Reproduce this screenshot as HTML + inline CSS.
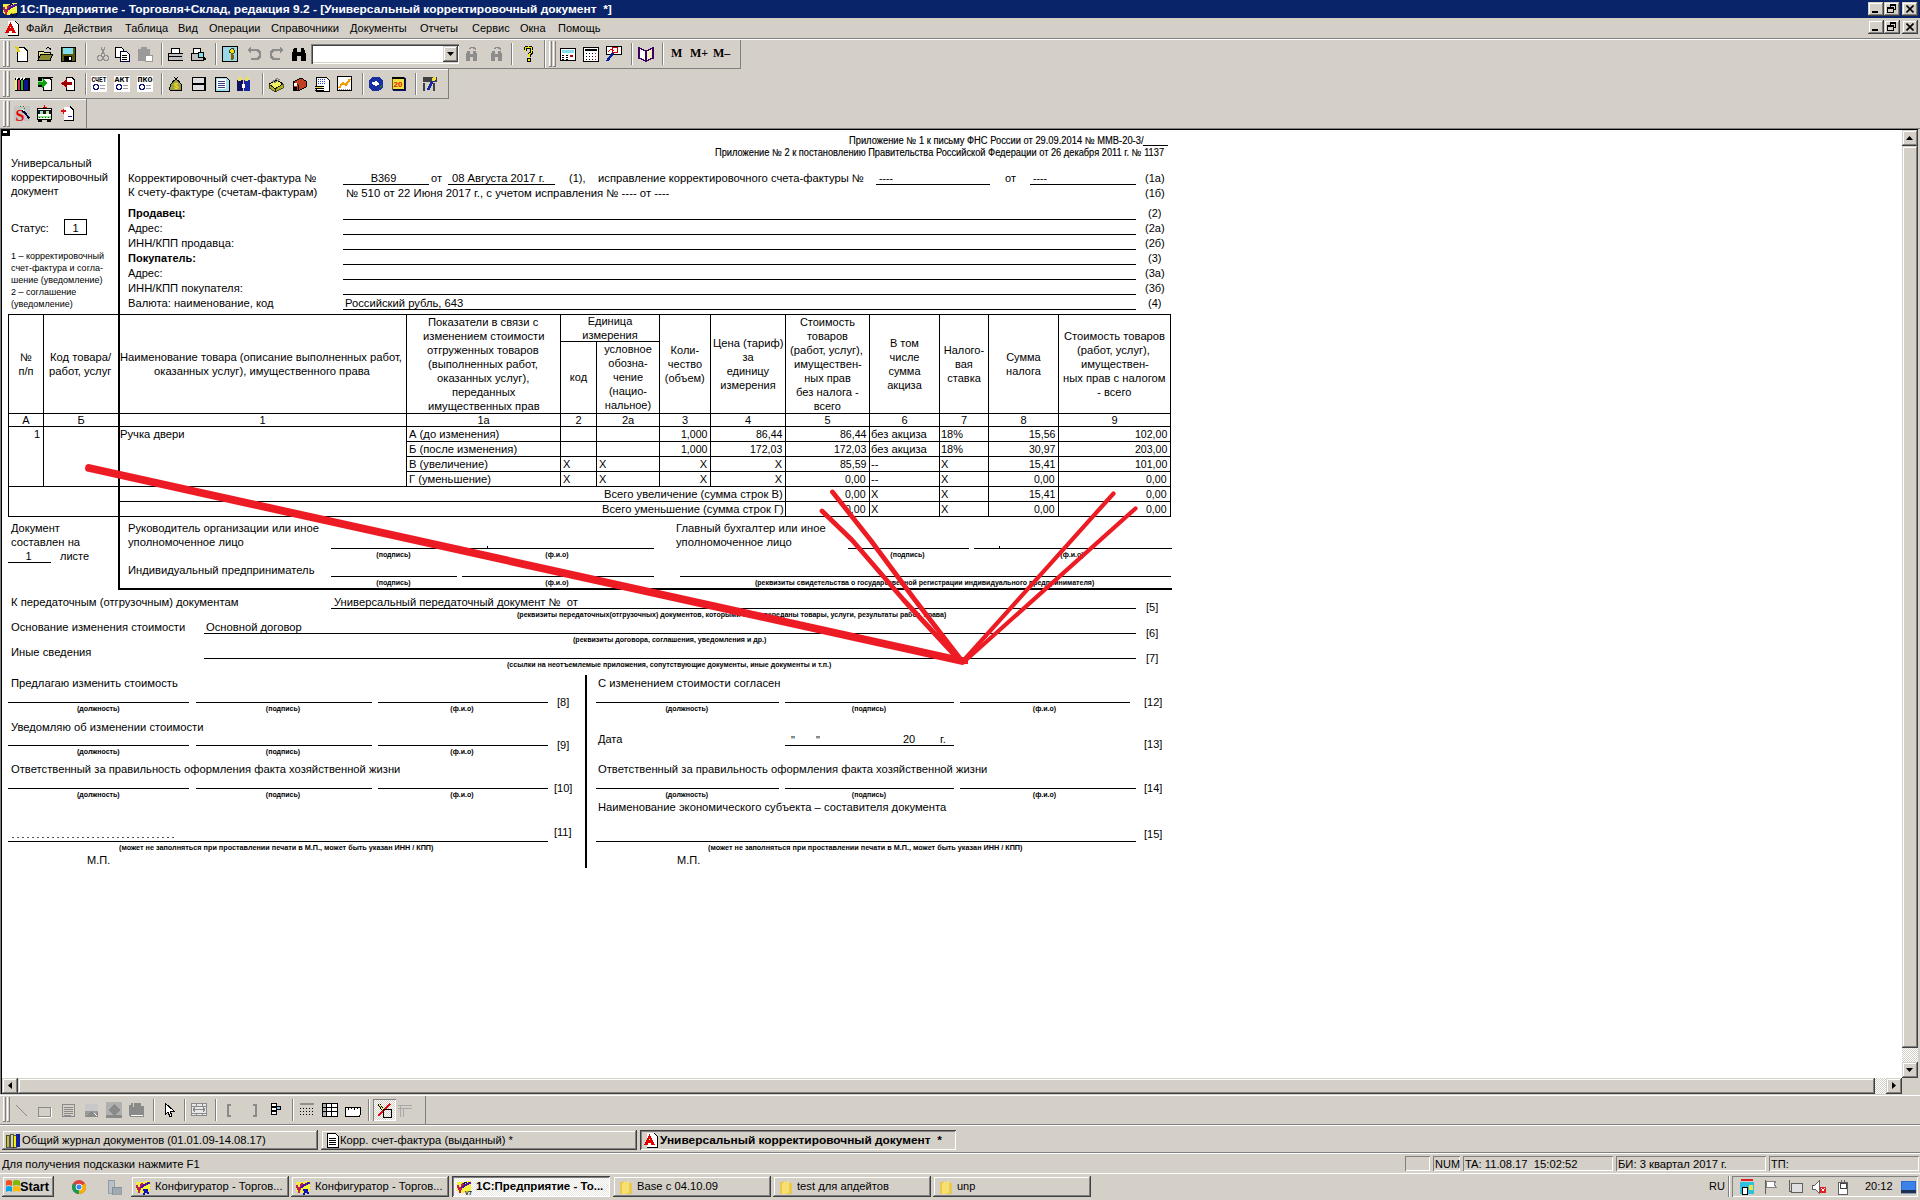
<!DOCTYPE html>
<html><head><meta charset="utf-8"><title>1C</title>
<style>
html,body{margin:0;padding:0;width:1920px;height:1200px;overflow:hidden;background:#D4D0C8;}
body{position:relative;font-family:"Liberation Sans",sans-serif;}
.t{position:absolute;white-space:pre;transform-origin:0 0;font-family:"Liberation Sans",sans-serif;}
.r{position:absolute;}
</style></head><body>
<div class="r" style="left:0px;top:0px;width:1920px;height:1200px;background:#D4D0C8;"></div>
<div class="r" style="left:0px;top:0px;width:1920px;height:18px;background:#0A246A;"></div>
<svg class="r" style="left:2px;top:1px" width="16" height="16" viewBox="0 0 16 16" shape-rendering="crispEdges"><path d="M1 3 H9 L10 2 H15 V12 L13 13 H8 L7 14 H3 L1 12 Z" fill="#F4F040"/><path d="M1.5 6 L4 12 L7 4" stroke="#C02050" stroke-width="2.2" fill="none"/><path d="M6 9 Q9 5 15 4" stroke="#5010A0" stroke-width="2.2" fill="none"/><path d="M7 5 Q9 3 11 4" stroke="#101060" stroke-width="1.3" fill="none"/><text x="9" y="16" font-size="5.5" font-weight="bold" fill="#000" font-family="Liberation Sans">V7</text></svg>
<div class="t" style="left:20.00px;top:4px;font-size:11px;line-height:11px;font-weight:bold;color:#fff;transform:scaleX(1.0862);">1С:Предприятие - Торговля+Склад, редакция 9.2 - [Универсальный корректировочный документ  *]</div>
<div class="r" style="left:1868px;top:2px;width:16px;height:14px;background:#D4D0C8;box-shadow: inset -1px -1px 0 #404040, inset 1px 1px 0 #D4D0C8, inset -2px -2px 0 #808080, inset 2px 2px 0 #FFFFFF;"></div>
<div class="r" style="left:1872px;top:11px;width:6px;height:2px;background:#000;"></div>
<div class="r" style="left:1884px;top:2px;width:16px;height:14px;background:#D4D0C8;box-shadow: inset -1px -1px 0 #404040, inset 1px 1px 0 #D4D0C8, inset -2px -2px 0 #808080, inset 2px 2px 0 #FFFFFF;"></div>
<div class="r" style="left:1890px;top:4px;width:6px;height:6px;border:1px solid #000;border-top-width:2px;box-sizing:border-box;"></div>
<div class="r" style="left:1887px;top:7px;width:7px;height:6px;border:1px solid #000;border-top-width:2px;box-sizing:border-box;background:#D4D0C8"></div>
<div class="r" style="left:1902px;top:2px;width:16px;height:14px;background:#D4D0C8;box-shadow: inset -1px -1px 0 #404040, inset 1px 1px 0 #D4D0C8, inset -2px -2px 0 #808080, inset 2px 2px 0 #FFFFFF;"></div>
<svg class="r" style="left:1906px;top:5px" width="8" height="8"><path d="M0.5 0.5 L7.5 7.5 M7.5 0.5 L0.5 7.5" stroke="#000" stroke-width="1.6"/></svg>
<svg class="r" style="left:4px;top:20px" width="16" height="16" viewBox="0 0 16 16" shape-rendering="crispEdges"><path d="M4 1 H11 L14 4 V15 H4 Z" fill="#fff"/><path d="M11 1 L14 4 V15 H4" stroke="#000" fill="none"/><path d="M1 13 L6.5 2 L12 13 Z" fill="#E00000"/><rect x="5" y="11" width="3" height="2" fill="#fff"/><rect x="6" y="7" width="1" height="1" fill="#fff"/></svg>
<div class="t" style="left:26.00px;top:23px;font-size:11px;line-height:11px;">Файл</div>
<div class="t" style="left:64.00px;top:23px;font-size:11px;line-height:11px;">Действия</div>
<div class="t" style="left:125.00px;top:23px;font-size:11px;line-height:11px;">Таблица</div>
<div class="t" style="left:178.00px;top:23px;font-size:11px;line-height:11px;">Вид</div>
<div class="t" style="left:209.00px;top:23px;font-size:11px;line-height:11px;">Операции</div>
<div class="t" style="left:271.00px;top:23px;font-size:11px;line-height:11px;transform:scaleX(1.0200);">Справочники</div>
<div class="t" style="left:350.00px;top:23px;font-size:11px;line-height:11px;">Документы</div>
<div class="t" style="left:420.00px;top:23px;font-size:11px;line-height:11px;">Отчеты</div>
<div class="t" style="left:472.00px;top:23px;font-size:11px;line-height:11px;">Сервис</div>
<div class="t" style="left:520.00px;top:23px;font-size:11px;line-height:11px;">Окна</div>
<div class="t" style="left:558.00px;top:23px;font-size:11px;line-height:11px;">Помощь</div>
<div class="r" style="left:1868px;top:20px;width:16px;height:14px;background:#D4D0C8;box-shadow: inset -1px -1px 0 #404040, inset 1px 1px 0 #D4D0C8, inset -2px -2px 0 #808080, inset 2px 2px 0 #FFFFFF;"></div>
<div class="r" style="left:1872px;top:29px;width:6px;height:2px;background:#000;"></div>
<div class="r" style="left:1884px;top:20px;width:16px;height:14px;background:#D4D0C8;box-shadow: inset -1px -1px 0 #404040, inset 1px 1px 0 #D4D0C8, inset -2px -2px 0 #808080, inset 2px 2px 0 #FFFFFF;"></div>
<div class="r" style="left:1890px;top:22px;width:6px;height:6px;border:1px solid #000;border-top-width:2px;box-sizing:border-box;"></div>
<div class="r" style="left:1887px;top:25px;width:7px;height:6px;border:1px solid #000;border-top-width:2px;box-sizing:border-box;background:#D4D0C8"></div>
<div class="r" style="left:1902px;top:20px;width:16px;height:14px;background:#D4D0C8;box-shadow: inset -1px -1px 0 #404040, inset 1px 1px 0 #D4D0C8, inset -2px -2px 0 #808080, inset 2px 2px 0 #FFFFFF;"></div>
<svg class="r" style="left:1906px;top:23px" width="8" height="8"><path d="M0.5 0.5 L7.5 7.5 M7.5 0.5 L0.5 7.5" stroke="#000" stroke-width="1.6"/></svg>
<div class="r" style="left:0px;top:38px;width:1920px;height:1px;background:#808080;"></div>
<div class="r" style="left:0px;top:39px;width:1920px;height:1px;background:#FFFFFF;"></div>
<div class="r" style="left:0px;top:68px;width:741px;height:1px;background:#808080;"></div>
<div class="r" style="left:544px;top:40px;width:1px;height:29px;background:#808080;"></div>
<div class="r" style="left:545px;top:40px;width:1px;height:28px;background:#FFFFFF;"></div>
<div class="r" style="left:740px;top:40px;width:1px;height:29px;background:#808080;"></div>
<div class="r" style="left:0px;top:69px;width:449px;height:1px;background:#FFFFFF;"></div>
<div class="r" style="left:0px;top:98px;width:449px;height:1px;background:#808080;"></div>
<div class="r" style="left:448px;top:69px;width:1px;height:30px;background:#808080;"></div>
<div class="r" style="left:0px;top:99px;width:87px;height:1px;background:#FFFFFF;"></div>
<div class="r" style="left:86px;top:99px;width:1px;height:29px;background:#808080;"></div>
<div class="r" style="left:0px;top:128px;width:1920px;height:1px;background:#808080;"></div>
<div class="r" style="left:3px;top:41px;width:1px;height:26px;background:#FFFFFF;"></div>
<div class="r" style="left:4px;top:41px;width:2px;height:26px;background:#D4D0C8;"></div>
<div class="r" style="left:5px;top:41px;width:1px;height:26px;background:#808080;"></div>
<div class="r" style="left:3px;top:66px;width:3px;height:1px;background:#808080;"></div>
<div class="r" style="left:7px;top:41px;width:1px;height:26px;background:#FFFFFF;"></div>
<div class="r" style="left:8px;top:41px;width:2px;height:26px;background:#D4D0C8;"></div>
<div class="r" style="left:9px;top:41px;width:1px;height:26px;background:#808080;"></div>
<div class="r" style="left:7px;top:66px;width:3px;height:1px;background:#808080;"></div>
<div class="r" style="left:549px;top:41px;width:1px;height:26px;background:#FFFFFF;"></div>
<div class="r" style="left:550px;top:41px;width:2px;height:26px;background:#D4D0C8;"></div>
<div class="r" style="left:551px;top:41px;width:1px;height:26px;background:#808080;"></div>
<div class="r" style="left:549px;top:66px;width:3px;height:1px;background:#808080;"></div>
<div class="r" style="left:553px;top:41px;width:1px;height:26px;background:#FFFFFF;"></div>
<div class="r" style="left:554px;top:41px;width:2px;height:26px;background:#D4D0C8;"></div>
<div class="r" style="left:555px;top:41px;width:1px;height:26px;background:#808080;"></div>
<div class="r" style="left:553px;top:66px;width:3px;height:1px;background:#808080;"></div>
<div class="r" style="left:3px;top:71px;width:1px;height:26px;background:#FFFFFF;"></div>
<div class="r" style="left:4px;top:71px;width:2px;height:26px;background:#D4D0C8;"></div>
<div class="r" style="left:5px;top:71px;width:1px;height:26px;background:#808080;"></div>
<div class="r" style="left:3px;top:96px;width:3px;height:1px;background:#808080;"></div>
<div class="r" style="left:7px;top:71px;width:1px;height:26px;background:#FFFFFF;"></div>
<div class="r" style="left:8px;top:71px;width:2px;height:26px;background:#D4D0C8;"></div>
<div class="r" style="left:9px;top:71px;width:1px;height:26px;background:#808080;"></div>
<div class="r" style="left:7px;top:96px;width:3px;height:1px;background:#808080;"></div>
<div class="r" style="left:3px;top:101px;width:1px;height:26px;background:#FFFFFF;"></div>
<div class="r" style="left:4px;top:101px;width:2px;height:26px;background:#D4D0C8;"></div>
<div class="r" style="left:5px;top:101px;width:1px;height:26px;background:#808080;"></div>
<div class="r" style="left:3px;top:126px;width:3px;height:1px;background:#808080;"></div>
<div class="r" style="left:7px;top:101px;width:1px;height:26px;background:#FFFFFF;"></div>
<div class="r" style="left:8px;top:101px;width:2px;height:26px;background:#D4D0C8;"></div>
<div class="r" style="left:9px;top:101px;width:1px;height:26px;background:#808080;"></div>
<div class="r" style="left:7px;top:126px;width:3px;height:1px;background:#808080;"></div>
<svg class="r" style="left:14px;top:46px" width="16" height="16" viewBox="0 0 16 16" shape-rendering="crispEdges"><path d="M3 1.5 H10 L13.5 5 V15.5 H3 Z" fill="#fff" stroke="#000"/><path d="M1 1 L6 5 M4 1 L4 6" stroke="#E0D000" stroke-width="1.5"/></svg>
<svg class="r" style="left:37px;top:46px" width="16" height="16" viewBox="0 0 16 16" shape-rendering="crispEdges"><path d="M1 5 H6 L7 6 H13 V14 H1 Z" fill="#E8E090" stroke="#000"/><path d="M1 14 L4 8 H16 L13 14 Z" fill="#8A8A30" stroke="#000"/><path d="M9 3 Q12 0 14 4" stroke="#000" fill="none"/></svg>
<svg class="r" style="left:60px;top:46px" width="16" height="16" viewBox="0 0 16 16" shape-rendering="crispEdges"><rect x="1" y="1" width="14" height="14" fill="#5A5A10" stroke="#000"/><rect x="3" y="2" width="10" height="6" fill="#80E0F0"/><rect x="4" y="10" width="8" height="5" fill="#000"/><rect x="9" y="11" width="2" height="3" fill="#fff"/></svg>
<div class="r" style="left:85px;top:43px;width:1px;height:22px;background:#808080;"></div>
<div class="r" style="left:86px;top:43px;width:1px;height:22px;background:#FFFFFF;"></div>
<svg class="r" style="left:95px;top:46px" width="16" height="16" viewBox="0 0 16 16" shape-rendering="crispEdges"><circle cx="5" cy="12" r="2.5" stroke="#909090" fill="none" stroke-width="1.3"/><circle cx="11" cy="12" r="2.5" stroke="#909090" fill="none" stroke-width="1.3"/><path d="M6 10 L10 1 M10 10 L6 1" stroke="#909090" stroke-width="1.3"/></svg>
<svg class="r" style="left:114px;top:46px" width="16" height="16" viewBox="0 0 16 16" shape-rendering="crispEdges"><path d="M1 1 H7 L9 3 V11 H1 Z" fill="#fff" stroke="#000"/><path d="M6 5 H12 L15 8 V15 H6 Z" fill="#fff" stroke="#000040"/><path d="M8 9 H13 M8 11 H13 M8 13 H13" stroke="#000"/></svg>
<svg class="r" style="left:137px;top:46px" width="16" height="16" viewBox="0 0 16 16" shape-rendering="crispEdges"><rect x="1" y="3" width="12" height="12" rx="1" fill="#9A9A9A"/><rect x="4" y="1" width="6" height="3" fill="#9A9A9A"/><rect x="8" y="9" width="7" height="6" fill="#fff" stroke="#9A9A9A"/></svg>
<div class="r" style="left:161px;top:43px;width:1px;height:22px;background:#808080;"></div>
<div class="r" style="left:162px;top:43px;width:1px;height:22px;background:#FFFFFF;"></div>
<svg class="r" style="left:167px;top:46px" width="16" height="16" viewBox="0 0 16 16" shape-rendering="crispEdges"><rect x="1" y="7" width="15" height="7" fill="#C0C0C0" stroke="#000"/><path d="M4 7 L5 2 H12 L13 7" fill="#fff" stroke="#000"/><rect x="2" y="10" width="13" height="1" fill="#000"/></svg>
<svg class="r" style="left:190px;top:46px" width="16" height="16" viewBox="0 0 16 16" shape-rendering="crispEdges"><rect x="1" y="7" width="12" height="7" fill="#C0C0C0" stroke="#000"/><path d="M3 7 L4 2 H10 L11 7" fill="#fff" stroke="#000"/><circle cx="11" cy="9" r="3" fill="#80E0F0" stroke="#000"/><path d="M13 11 L16 14" stroke="#000" stroke-width="2"/></svg>
<div class="r" style="left:215px;top:43px;width:1px;height:22px;background:#808080;"></div>
<div class="r" style="left:216px;top:43px;width:1px;height:22px;background:#FFFFFF;"></div>
<svg class="r" style="left:222px;top:46px" width="16" height="16" viewBox="0 0 16 16" shape-rendering="crispEdges"><rect x="0.5" y="0.5" width="15" height="15" fill="#9AD8E8" stroke="#000"/><circle cx="10" cy="5" r="2.5" fill="#F0E000" stroke="#000" stroke-width=".7"/><path d="M10 7 V14 M10 10 H12 M10 12 H12" stroke="#806000" stroke-width="1.3"/></svg>
<svg class="r" style="left:246px;top:46px" width="16" height="16" viewBox="0 0 16 16" shape-rendering="crispEdges"><path d="M4 4 H10 Q14 4 14 8.5 Q14 13 10 13 H5" stroke="#8C8C8C" stroke-width="2.5" fill="none"/><path d="M1 4 L5 0.5 V7.5 Z" fill="#8C8C8C"/></svg>
<svg class="r" style="left:269px;top:46px" width="16" height="16" viewBox="0 0 16 16" shape-rendering="crispEdges"><path d="M12 4 H6 Q2 4 2 8.5 Q2 13 6 13 H11" stroke="#8C8C8C" stroke-width="2.5" fill="none"/><path d="M15 4 L11 0.5 V7.5 Z" fill="#8C8C8C"/></svg>
<svg class="r" style="left:291px;top:46px" width="16" height="16" viewBox="0 0 16 16" shape-rendering="crispEdges"><path d="M1 15 V8 L3 2 H6 V15 Z M10 15 V2 H13 L15 8 V15 Z" fill="#000"/><rect x="6" y="6" width="4" height="4" fill="#000"/></svg>
<div class="r" style="left:311px;top:44px;width:148px;height:20px;background:#fff;box-shadow: inset 1px 1px 0 #808080, inset 2px 2px 0 #404040, inset -1px -1px 0 #FFFFFF, inset -2px -2px 0 #D4D0C8;"></div>
<div class="r" style="left:443px;top:46px;width:15px;height:16px;background:#D4D0C8;box-shadow: inset -1px -1px 0 #404040, inset 1px 1px 0 #D4D0C8, inset -2px -2px 0 #808080, inset 2px 2px 0 #FFFFFF;"></div>
<svg class="r" style="left:447px;top:52px" width="8" height="5"><path d="M0 0 H7 L3.5 4 Z" fill="#000"/></svg>
<svg class="r" style="left:465px;top:46px" width="16" height="16" viewBox="0 0 16 16" shape-rendering="crispEdges"><path d="M1 15 V9 L2 5 H5 V15 Z M8 15 V5 H11 L12 9 V15 Z" fill="#8C8C8C"/><rect x="5" y="8" width="3" height="3" fill="#8C8C8C"/><path d="M4 3 Q7 0 11 3" stroke="#8C8C8C" stroke-width="1.5" fill="none"/></svg>
<svg class="r" style="left:490px;top:46px" width="16" height="16" viewBox="0 0 16 16" shape-rendering="crispEdges"><path d="M1 15 V9 L2 5 H5 V15 Z M8 15 V5 H11 L12 9 V15 Z" fill="#8C8C8C"/><rect x="5" y="8" width="3" height="3" fill="#8C8C8C"/><path d="M4 3 Q7 0 11 3" stroke="#8C8C8C" stroke-width="1.5" fill="none"/></svg>
<div class="r" style="left:511px;top:43px;width:1px;height:22px;background:#808080;"></div>
<div class="r" style="left:512px;top:43px;width:1px;height:22px;background:#FFFFFF;"></div>
<svg class="r" style="left:520px;top:46px" width="16" height="16" viewBox="0 0 16 16" shape-rendering="crispEdges"><path d="M5 5 Q5 1 8.5 1 Q12 1 12 5 Q12 7 9 8.5 V11" stroke="#000" stroke-width="3" fill="none"/><path d="M5 5 Q5 1 8.5 1 Q12 1 12 5 Q12 7 9 8.5 V11" stroke="#F0F000" stroke-width="1.3" fill="none"/><rect x="7.5" y="12.5" width="3" height="3" fill="#F0F000" stroke="#000"/></svg>
<svg class="r" style="left:560px;top:47px" width="16" height="16" viewBox="0 0 16 16" shape-rendering="crispEdges"><rect x="0.5" y="1.5" width="15" height="12" fill="#fff" stroke="#000"/><rect x="2" y="3" width="12" height="3" fill="#80E0F0"/><path d="M2 8 H4 M6 8 H8 M2 10 H4 M6 10 H8 M2 12 H4 M6 12 H8" stroke="#000"/><rect x="10" y="8" width="3" height="2" fill="#C00000"/></svg>
<svg class="r" style="left:583px;top:46px" width="16" height="16" viewBox="0 0 16 16" shape-rendering="crispEdges"><rect x="0.5" y="1.5" width="15" height="14" fill="#fff" stroke="#000"/><path d="M2 4 H14" stroke="#000" stroke-width="2"/><path d="M3 7 H4 M6 7 H7 M9 7 H10 M3 10 H4 M6 10 H7 M9 10 H10 M3 13 H4 M6 13 H7 M9 13 H10" stroke="#000"/><path d="M12 7 H13 M12 10 H13 M12 13 H13" stroke="#E00000"/></svg>
<svg class="r" style="left:606px;top:46px" width="16" height="16" viewBox="0 0 16 16" shape-rendering="crispEdges"><rect x="0.5" y="0.5" width="15" height="8" fill="#fff" stroke="#000"/><path d="M2 6 L5 3 L8 5" stroke="#E00000" fill="none"/><circle cx="9" cy="4" r="3" fill="none" stroke="#C00000"/><path d="M7 7 L1 15" stroke="#0020A0" stroke-width="2.5"/></svg>
<div class="r" style="left:631px;top:43px;width:1px;height:22px;background:#808080;"></div>
<div class="r" style="left:632px;top:43px;width:1px;height:22px;background:#FFFFFF;"></div>
<svg class="r" style="left:638px;top:46px" width="16" height="16" viewBox="0 0 16 16" shape-rendering="crispEdges"><path d="M1 2 L8 5 V15 L1 12 Z" fill="#fff" stroke="#400060" stroke-width="1.5"/><path d="M8 5 L15 2 V12 L8 15 Z" fill="#F0F0C0" stroke="#400060" stroke-width="1.5"/></svg>
<div class="r" style="left:662px;top:43px;width:1px;height:22px;background:#808080;"></div>
<div class="r" style="left:663px;top:43px;width:1px;height:22px;background:#FFFFFF;"></div>
<div class="t" style="left:671.00px;top:47px;font-size:12px;line-height:12px;font-weight:bold;font-family:'Liberation Serif';">M</div>
<div class="t" style="left:690.00px;top:47px;font-size:12px;line-height:12px;font-weight:bold;font-family:'Liberation Serif';">M+</div>
<div class="t" style="left:713.00px;top:47px;font-size:12px;line-height:12px;font-weight:bold;font-family:'Liberation Serif';">M–</div>
<svg class="r" style="left:14px;top:76px" width="16" height="16" viewBox="0 0 16 16" shape-rendering="crispEdges"><path d="M1 2 H16 V14 L15 15 H1 Z" fill="#000"/><rect x="1" y="4" width="2" height="10" fill="#F0F060"/><rect x="4" y="4" width="2" height="10" fill="#E0207A"/><rect x="7" y="4" width="2" height="10" fill="#20C020"/><rect x="10" y="4" width="4" height="10" fill="#101090"/><path d="M2 4 L4 1 M6 4 L8 1 M9 4 L11 1" stroke="#fff"/></svg>
<svg class="r" style="left:37px;top:76px" width="16" height="16" viewBox="0 0 16 16" shape-rendering="crispEdges"><path d="M1 1 H16 V2 H13 L15 4 V15 H6 V11 H1 Z" fill="#000"/><path d="M7 3 H12 L14 5 V14 H7 Z" fill="#fff"/><path d="M1 5 H5 V2 L10 7 L5 12 V9 H1 Z" fill="#10A010"/><path d="M1 5 H5 V3" stroke="#80E080" fill="none"/></svg>
<svg class="r" style="left:60px;top:76px" width="16" height="16" viewBox="0 0 16 16" shape-rendering="crispEdges"><path d="M6 1 H12 L15 4 V15 H6 Z" fill="#000"/><path d="M7 2 H11 L14 5 V14 H7 Z" fill="#fff"/><path d="M12 6 H7 V3 L1 7.5 L7 12 V9 H12 Z" fill="#A00000"/></svg>
<div class="r" style="left:85px;top:73px;width:1px;height:22px;background:#808080;"></div>
<div class="r" style="left:86px;top:73px;width:1px;height:22px;background:#FFFFFF;"></div>
<svg class="r" style="left:91px;top:76px" width="16" height="16" viewBox="0 0 16 16" shape-rendering="crispEdges"><rect x="0" y="5" width="16" height="11" fill="#fff"/><rect x="0" y="0" width="16" height="5" fill="#fff"/><text x="8" y="6" font-size="6.5" font-weight="bold" text-anchor="middle" font-family="Liberation Mono" fill="#000" textLength="15" lengthAdjust="spacingAndGlyphs">СЧЕТ</text><circle cx="5" cy="11" r="2.5" fill="none" stroke="#101080" stroke-width="1.3"/><path d="M9 9 H14 M9 12 H14" stroke="#A0A0A0"/></svg>
<svg class="r" style="left:114px;top:76px" width="16" height="16" viewBox="0 0 16 16" shape-rendering="crispEdges"><rect x="0" y="5" width="16" height="11" fill="#fff"/><rect x="0" y="0" width="16" height="5" fill="#fff"/><text x="8" y="6" font-size="6.5" font-weight="bold" text-anchor="middle" font-family="Liberation Mono" fill="#000" textLength="15" lengthAdjust="spacingAndGlyphs">АКТ</text><circle cx="5" cy="11" r="2.5" fill="none" stroke="#101080" stroke-width="1.3"/><path d="M9 9 H14 M9 12 H14" stroke="#A0A0A0"/></svg>
<svg class="r" style="left:137px;top:76px" width="16" height="16" viewBox="0 0 16 16" shape-rendering="crispEdges"><rect x="0" y="5" width="16" height="11" fill="#fff"/><rect x="0" y="0" width="16" height="5" fill="#fff"/><text x="8" y="6" font-size="6.5" font-weight="bold" text-anchor="middle" font-family="Liberation Mono" fill="#000" textLength="15" lengthAdjust="spacingAndGlyphs">ПКО</text><circle cx="5" cy="11" r="2.5" fill="none" stroke="#101080" stroke-width="1.3"/><path d="M9 9 H14 M9 12 H14" stroke="#A0A0A0"/></svg>
<div class="r" style="left:161px;top:73px;width:1px;height:22px;background:#808080;"></div>
<div class="r" style="left:162px;top:73px;width:1px;height:22px;background:#FFFFFF;"></div>
<svg class="r" style="left:168px;top:76px" width="16" height="16" viewBox="0 0 16 16" shape-rendering="crispEdges"><path d="M8 3 Q15 8 14 14 H2 Q1 8 8 3 Z" fill="#9A9A50" stroke="#000"/><path d="M6 1 L8 3 L10 1" stroke="#000" fill="none"/><text x="8" y="13" font-size="9" font-weight="bold" text-anchor="middle" fill="#F0E000" font-family="Liberation Sans">$</text></svg>
<svg class="r" style="left:191px;top:76px" width="16" height="16" viewBox="0 0 16 16" shape-rendering="crispEdges"><rect x="1" y="1" width="14" height="14" fill="#000"/><rect x="2" y="2" width="11" height="5" fill="#E0E0E0"/><rect x="2" y="9" width="11" height="5" fill="#E0E0E0"/></svg>
<svg class="r" style="left:214px;top:76px" width="16" height="16" viewBox="0 0 16 16" shape-rendering="crispEdges"><path d="M1 1 H12 L15 4 V15 H1 Z" fill="#A0E0F0" stroke="#000"/><rect x="3" y="3" width="9" height="10" fill="#fff"/><path d="M4 5 H11 M4 7 H11 M4 9 H11 M4 11 H11" stroke="#404080"/></svg>
<svg class="r" style="left:236px;top:76px" width="16" height="16" viewBox="0 0 16 16" shape-rendering="crispEdges"><rect x="1" y="4" width="6" height="11" fill="#101060"/><rect x="8" y="4" width="6" height="11" fill="#1828A0"/><circle cx="4" cy="3" r="2" fill="#F0E060"/><circle cx="11" cy="3" r="2" fill="#F0E060"/><rect x="6" y="8" width="3" height="4" fill="#fff"/></svg>
<div class="r" style="left:262px;top:73px;width:1px;height:22px;background:#808080;"></div>
<div class="r" style="left:263px;top:73px;width:1px;height:22px;background:#FFFFFF;"></div>
<svg class="r" style="left:268px;top:76px" width="16" height="16" viewBox="0 0 16 16" shape-rendering="crispEdges"><path d="M1 8 L9 4 L15 8 L7 13 Z" fill="#F0F060" stroke="#000"/><path d="M1 8 V12 L7 16 V13 Z M7 13 V16 L15 12 V8 Z" fill="#B0B020" stroke="#000" stroke-width=".6"/><path d="M4 6 L10 2 M6 7 L12 3" stroke="#808080"/></svg>
<svg class="r" style="left:291px;top:76px" width="16" height="16" viewBox="0 0 16 16" shape-rendering="crispEdges"><path d="M2 6 L10 2 L15 5 V11 L7 15 L2 12 Z" fill="#C04020" stroke="#000"/><path d="M2 6 L7 9 V15" stroke="#000" fill="none"/><circle cx="4" cy="13" r="2" fill="#000"/><rect x="3" y="7" width="3" height="3" fill="#fff"/></svg>
<svg class="r" style="left:314px;top:76px" width="16" height="16" viewBox="0 0 16 16" shape-rendering="crispEdges"><path d="M2 1 H12 L15 4 V15 H2 Z" fill="#fff" stroke="#000"/><path d="M4 3 H12 M4 5 H12 M4 7 H12" stroke="#2040E0" stroke-dasharray="1 1"/><path d="M1 10.5 H10 M1 12.5 H10 M1 14.5 H10" stroke="#000" stroke-width="1"/><path d="M2 11.5 H8" stroke="#F0E040"/></svg>
<svg class="r" style="left:337px;top:76px" width="16" height="16" viewBox="0 0 16 16" shape-rendering="crispEdges"><rect x="0.5" y="0.5" width="14" height="14" fill="#fff" stroke="#000"/><path d="M2 12 L6 7 L9 9 L13 3" stroke="#F0A000" stroke-width="2" fill="none"/><path d="M2 13 H13" stroke="#808080" stroke-dasharray="1 1"/></svg>
<div class="r" style="left:362px;top:73px;width:1px;height:22px;background:#808080;"></div>
<div class="r" style="left:363px;top:73px;width:1px;height:22px;background:#FFFFFF;"></div>
<svg class="r" style="left:368px;top:76px" width="16" height="16" viewBox="0 0 16 16" shape-rendering="crispEdges"><circle cx="8" cy="8" r="7.5" fill="#1830A0"/><path d="M3 7 L8 5 L12 8 L8 10 Z" fill="#fff"/><path d="M11 11 L14 9 L13 13 Z" fill="#208020"/></svg>
<svg class="r" style="left:391px;top:76px" width="16" height="16" viewBox="0 0 16 16" shape-rendering="crispEdges"><rect x="2" y="2" width="13" height="13" fill="#101070"/><rect x="1" y="1" width="12" height="12" fill="#F0E040" stroke="#000" stroke-width=".6"/><rect x="1" y="1" width="12" height="2" fill="#000"/><text x="7" y="11" font-size="8" font-weight="bold" text-anchor="middle" fill="#E02000" font-family="Liberation Sans">20</text></svg>
<div class="r" style="left:415px;top:73px;width:1px;height:22px;background:#808080;"></div>
<div class="r" style="left:416px;top:73px;width:1px;height:22px;background:#FFFFFF;"></div>
<svg class="r" style="left:422px;top:76px" width="16" height="16" viewBox="0 0 16 16" shape-rendering="crispEdges"><rect x="1" y="1" width="14" height="5" fill="#404040"/><rect x="1" y="7" width="2" height="8" fill="#404040"/><rect x="11" y="7" width="2" height="8" fill="#404040"/><path d="M6 14 L10 6 L14 3" stroke="#1828A0" stroke-width="2.5" fill="none"/><circle cx="12" cy="3" r="2" fill="#F0E040"/></svg>
<svg class="r" style="left:14px;top:106px" width="16" height="16" viewBox="0 0 16 16" shape-rendering="crispEdges"><rect x="0" y="0" width="16" height="15" fill="#C4C4C4"/><text x="6" y="15" font-size="16" font-weight="bold" text-anchor="middle" fill="#E80000" font-family="Liberation Serif">S</text><path d="M8 3.5 L15.5 12.5" stroke="#000030" stroke-width="2"/><path d="M8 3 L10 5" stroke="#fff"/><path d="M6 0 V1 M9 0 V1 M10 2 V3" stroke="#208020"/></svg>
<svg class="r" style="left:37px;top:105px" width="16" height="17" viewBox="0 0 16 17" shape-rendering="crispEdges"><path d="M7.5 0 V4 M5.5 2 H9.5" stroke="#E00000"/><rect x="0.5" y="3.5" width="14" height="11" fill="#fff" stroke="#000"/><rect x="1" y="5" width="13" height="4" fill="#101820"/><rect x="3" y="6" width="3" height="3" fill="#A0D8C0"/><rect x="9" y="6" width="3" height="3" fill="#D8E0A0"/><rect x="1" y="11" width="13" height="2" fill="#90E890"/><path d="M2 12 H13" stroke="#404040" stroke-dasharray="1 2"/><rect x="1" y="14" width="4" height="3" fill="#000"/><rect x="10" y="14" width="4" height="3" fill="#000"/></svg>
<svg class="r" style="left:60px;top:106px" width="16" height="16" viewBox="0 0 16 16" shape-rendering="crispEdges"><path d="M3.5 0.5 H10 L13.5 4 V14.5 H3.5 Z" fill="#fff"/><path d="M10 0.5 L13.5 4 V14.5 H3.5" stroke="#000" fill="none"/><path d="M1 5 H6 M3.5 2.5 V7.5" stroke="#E01010" stroke-width="1.5"/><path d="M8 10.5 H12" stroke="#1020A0" stroke-width="1.5"/></svg>
<div class="r" style="left:0px;top:129px;width:1920px;height:1px;background:#000;"></div>
<div class="r" style="left:0px;top:129px;width:1px;height:966px;background:#808080;"></div>
<div class="r" style="left:1px;top:129px;width:1px;height:966px;background:#000;"></div>
<div class="r" style="left:2px;top:130px;width:1900px;height:948px;background:#fff;"></div>
<div class="r" style="left:1px;top:129px;width:9px;height:7px;background:#000;"></div>
<div class="r" style="left:3px;top:131px;width:4px;height:2px;background:#fff;"></div>
<div class="r" style="left:1902px;top:130px;width:16px;height:948px;background:#E8E6E2;background-image:repeating-conic-gradient(#fff 0 25%, #D4D0C8 0 50%);background-size:2px 2px;"></div>
<div class="r" style="left:1918px;top:129px;width:2px;height:966px;background:#D4D0C8;"></div>
<div class="r" style="left:1902px;top:130px;width:16px;height:16px;background:#D4D0C8;box-shadow: inset -1px -1px 0 #404040, inset 1px 1px 0 #D4D0C8, inset -2px -2px 0 #808080, inset 2px 2px 0 #FFFFFF;"></div>
<svg class="r" style="left:1906px;top:136px" width="8" height="5"><path d="M0 4 H7 L3.5 0 Z" fill="#000"/></svg>
<div class="r" style="left:1902px;top:146px;width:16px;height:902px;background:#D4D0C8;box-shadow: inset -1px -1px 0 #404040, inset 1px 1px 0 #D4D0C8, inset -2px -2px 0 #808080, inset 2px 2px 0 #FFFFFF;"></div>
<div class="r" style="left:1902px;top:1062px;width:16px;height:16px;background:#D4D0C8;box-shadow: inset -1px -1px 0 #404040, inset 1px 1px 0 #D4D0C8, inset -2px -2px 0 #808080, inset 2px 2px 0 #FFFFFF;"></div>
<svg class="r" style="left:1906px;top:1068px" width="8" height="5"><path d="M0 0 H7 L3.5 4 Z" fill="#000"/></svg>
<div class="r" style="left:2px;top:1078px;width:1900px;height:16px;background:#E8E6E2;background-image:repeating-conic-gradient(#fff 0 25%, #D4D0C8 0 50%);background-size:2px 2px;"></div>
<div class="r" style="left:2px;top:1078px;width:16px;height:16px;background:#D4D0C8;box-shadow: inset -1px -1px 0 #404040, inset 1px 1px 0 #D4D0C8, inset -2px -2px 0 #808080, inset 2px 2px 0 #FFFFFF;"></div>
<svg class="r" style="left:8px;top:1082px" width="5" height="8"><path d="M4 0 V7 L0 3.5 Z" fill="#000"/></svg>
<div class="r" style="left:18px;top:1078px;width:1857px;height:16px;background:#D4D0C8;box-shadow: inset -1px -1px 0 #404040, inset 1px 1px 0 #D4D0C8, inset -2px -2px 0 #808080, inset 2px 2px 0 #FFFFFF;"></div>
<div class="r" style="left:1886px;top:1078px;width:16px;height:16px;background:#D4D0C8;box-shadow: inset -1px -1px 0 #404040, inset 1px 1px 0 #D4D0C8, inset -2px -2px 0 #808080, inset 2px 2px 0 #FFFFFF;"></div>
<svg class="r" style="left:1892px;top:1082px" width="5" height="8"><path d="M0 0 V7 L4 3.5 Z" fill="#000"/></svg>
<div class="r" style="left:1902px;top:1078px;width:16px;height:16px;background:#D4D0C8;"></div>
<div class="r" style="left:0px;top:1094px;width:1920px;height:1px;background:#D4D0C8;"></div>
<div class="r" style="left:0px;top:1095px;width:1920px;height:1px;background:#FFFFFF;"></div>
<div class="r" style="left:3px;top:1097px;width:1px;height:25px;background:#FFFFFF;"></div>
<div class="r" style="left:4px;top:1097px;width:2px;height:25px;background:#D4D0C8;"></div>
<div class="r" style="left:5px;top:1097px;width:1px;height:25px;background:#808080;"></div>
<div class="r" style="left:3px;top:1121px;width:3px;height:1px;background:#808080;"></div>
<div class="r" style="left:7px;top:1097px;width:1px;height:25px;background:#FFFFFF;"></div>
<div class="r" style="left:8px;top:1097px;width:2px;height:25px;background:#D4D0C8;"></div>
<div class="r" style="left:9px;top:1097px;width:1px;height:25px;background:#808080;"></div>
<div class="r" style="left:7px;top:1121px;width:3px;height:1px;background:#808080;"></div>
<div class="r" style="left:425px;top:1096px;width:1px;height:28px;background:#808080;"></div>
<svg class="r" style="left:14px;top:1102px" width="16" height="16" viewBox="0 0 16 16" shape-rendering="crispEdges"><path d="M2 3 L13 14" stroke="#8A8A8A"/></svg>
<svg class="r" style="left:37px;top:1102px" width="16" height="16" viewBox="0 0 16 16" shape-rendering="crispEdges"><rect x="1.5" y="5.5" width="12" height="9" fill="none" stroke="#8A8A8A"/><path d="M2 15.5 H14 M14 6 V15" stroke="#fff"/></svg>
<svg class="r" style="left:61px;top:1102px" width="16" height="16" viewBox="0 0 16 16" shape-rendering="crispEdges"><rect x="1.5" y="2.5" width="12" height="12" fill="none" stroke="#8A8A8A"/><path d="M3 5 H12 M3 7 H12 M3 9 H12 M3 11 H12 M3 13 H10" stroke="#8A8A8A"/></svg>
<svg class="r" style="left:85px;top:1102px" width="16" height="16" viewBox="0 0 16 16" shape-rendering="crispEdges"><rect x="0" y="2" width="13" height="13" fill="#9A9A9A"/><path d="M0 2 H13 V9 H0 Z" fill="#C8C8C8"/><path d="M1 14 L6 9 L10 12 L13 10 V15 H1 Z" fill="#8A8A8A"/><path d="M9 11 L12 14" stroke="#fff"/></svg>
<svg class="r" style="left:106px;top:1102px" width="16" height="16" viewBox="0 0 16 16" shape-rendering="crispEdges"><rect x="0" y="0" width="16" height="16" fill="#B0B0B0"/><path d="M8 2 L14 8 L8 14 L2 8 Z" fill="#8A8A8A"/><rect x="0" y="13" width="16" height="3" fill="#8A8A8A"/></svg>
<svg class="r" style="left:129px;top:1102px" width="16" height="16" viewBox="0 0 16 16" shape-rendering="crispEdges"><path d="M0 3 H2 V1 H4 V5 H5 V1 H12 V4 H15 V14 L14 15 H1 L0 14 Z" fill="#8A8A8A"/><path d="M2 13 H14" stroke="#fff"/></svg>
<svg class="r" style="left:164px;top:1102px" width="16" height="16" viewBox="0 0 16 16" shape-rendering="crispEdges"><path d="M1 1 V13 L4 10 L6 15 L8 14 L6 9 H10 Z" fill="#fff" stroke="#000"/></svg>
<svg class="r" style="left:191px;top:1102px" width="16" height="16" viewBox="0 0 16 16" shape-rendering="crispEdges"><rect x="0.5" y="1.5" width="15" height="12" fill="#E8E8E8" stroke="#8A8A8A"/><path d="M1 4 H15 M1 11 H15 M5 1 V4 M11 1 V4 M5 11 V14 M11 11 V14" stroke="#8A8A8A"/><path d="M2 7.5 H14 M2 7.5 L4 5.5 M2 7.5 L4 9.5 M14 7.5 L12 5.5 M14 7.5 L12 9.5" stroke="#8A8A8A"/></svg>
<svg class="r" style="left:225px;top:1102px" width="16" height="16" viewBox="0 0 16 16" shape-rendering="crispEdges"><path d="M6 3 H3 V14 H6" stroke="#8A8A8A" fill="none" stroke-width="2"/></svg>
<svg class="r" style="left:249px;top:1102px" width="16" height="16" viewBox="0 0 16 16" shape-rendering="crispEdges"><path d="M4 3 H7 V14 H4" stroke="#8A8A8A" fill="none" stroke-width="2"/></svg>
<svg class="r" style="left:270px;top:1102px" width="16" height="16" viewBox="0 0 16 16" shape-rendering="crispEdges"><rect x="1.5" y="1.5" width="5" height="3" fill="#fff" stroke="#000"/><rect x="1.5" y="5.5" width="5" height="3" fill="#fff" stroke="#000"/><rect x="1.5" y="9.5" width="5" height="3" fill="#fff" stroke="#000"/><rect x="6.5" y="4.5" width="4" height="3" fill="#80D0F0" stroke="#000"/></svg>
<svg class="r" style="left:299px;top:1102px" width="16" height="16" viewBox="0 0 16 16" shape-rendering="crispEdges"><path d="M1 2 H15" stroke="#909090" stroke-width="2"/><path d="M1 6 H15 M1 9 H15 M1 12 H15" stroke="#000" stroke-dasharray="1 2"/></svg>
<svg class="r" style="left:322px;top:1102px" width="16" height="16" viewBox="0 0 16 16" shape-rendering="crispEdges"><rect x="0.5" y="1.5" width="15" height="13" fill="#fff" stroke="#000"/><rect x="1" y="2" width="3" height="12" fill="#B0B0B0"/><path d="M1 5 H15 M1 9 H15 M4 2 V15 M9 2 V15" stroke="#000"/></svg>
<svg class="r" style="left:345px;top:1102px" width="16" height="16" viewBox="0 0 16 16" shape-rendering="crispEdges"><path d="M0.5 5.5 H15.5 V12 L14 14.5 H0.5 Z" fill="#fff" stroke="#000"/><path d="M3 5 V8 M6 5 V7 M9 5 V8 M12 5 V7" stroke="#000"/></svg>
<svg class="r" style="left:397px;top:1102px" width="16" height="16" viewBox="0 0 16 16" shape-rendering="crispEdges"><path d="M1 3 H15 M1 6 H15 M3 3 V15 M6 6 V15" stroke="#A8A8A8"/></svg>
<div class="r" style="left:153px;top:1099px;width:1px;height:22px;background:#808080;"></div>
<div class="r" style="left:154px;top:1099px;width:1px;height:22px;background:#FFFFFF;"></div>
<div class="r" style="left:184px;top:1099px;width:1px;height:22px;background:#808080;"></div>
<div class="r" style="left:185px;top:1099px;width:1px;height:22px;background:#FFFFFF;"></div>
<div class="r" style="left:215px;top:1099px;width:1px;height:22px;background:#808080;"></div>
<div class="r" style="left:216px;top:1099px;width:1px;height:22px;background:#FFFFFF;"></div>
<div class="r" style="left:292px;top:1099px;width:1px;height:22px;background:#808080;"></div>
<div class="r" style="left:293px;top:1099px;width:1px;height:22px;background:#FFFFFF;"></div>
<div class="r" style="left:368px;top:1099px;width:1px;height:22px;background:#808080;"></div>
<div class="r" style="left:369px;top:1099px;width:1px;height:22px;background:#FFFFFF;"></div>
<div class="r" style="left:373px;top:1099px;width:23px;height:22px;background-image:repeating-conic-gradient(#fff 0 25%, #D4D0C8 0 50%);background-size:2px 2px;box-shadow: inset 1px 1px 0 #808080, inset -1px -1px 0 #FFFFFF;"></div>
<svg class="r" style="left:376px;top:1102px" width="16" height="16" viewBox="0 0 16 16" shape-rendering="crispEdges"><path d="M3 2 L7 8" stroke="#000" stroke-width="2.5"/><path d="M3 2 L7 8" stroke="#F0F040" stroke-width="1"/><path d="M14 2 L2 14" stroke="#E01010" stroke-width="2"/><rect x="7.5" y="7.5" width="8" height="8" fill="none" stroke="#000"/></svg>
<div class="r" style="left:0px;top:1124px;width:1920px;height:1px;background:#808080;"></div>
<div class="r" style="left:0px;top:1125px;width:1920px;height:1px;background:#FFFFFF;"></div>
<div class="r" style="left:2px;top:1130px;width:316px;height:20px;background:#D4D0C8;box-shadow: inset -1px -1px 0 #404040, inset 1px 1px 0 #D4D0C8, inset -2px -2px 0 #808080, inset 2px 2px 0 #FFFFFF;"></div>
<svg class="r" style="left:5px;top:1132px" width="16" height="16" viewBox="0 0 16 16" shape-rendering="crispEdges"><rect x="1" y="3" width="3" height="12" fill="#C0C040" stroke="#000" stroke-width=".6"/><rect x="5" y="2" width="3" height="13" fill="#D0D0D0" stroke="#000" stroke-width=".6"/><rect x="8" y="3" width="3" height="12" fill="#F0F000" stroke="#000" stroke-width=".6"/><rect x="11" y="2" width="4" height="13" fill="#1020A0"/></svg>
<div class="t" style="left:22.00px;top:1135px;font-size:11px;line-height:11px;transform:scaleX(1.0200);">Общий журнал документов (01.01.09-14.08.17)</div>
<div class="r" style="left:321px;top:1130px;width:316px;height:20px;background:#D4D0C8;box-shadow: inset -1px -1px 0 #404040, inset 1px 1px 0 #D4D0C8, inset -2px -2px 0 #808080, inset 2px 2px 0 #FFFFFF;"></div>
<svg class="r" style="left:325px;top:1132px" width="16" height="16" viewBox="0 0 16 16" shape-rendering="crispEdges"><path d="M2 1 H10 L13 4 V15 H2 Z" fill="#fff" stroke="#000"/><path d="M4 6 H11 M4 8 H11 M4 10 H11 M4 12 H11" stroke="#000"/></svg>
<div class="t" style="left:340.00px;top:1135px;font-size:11px;line-height:11px;transform:scaleX(1.0200);">Корр. счет-фактура (выданный) *</div>
<div class="r" style="left:640px;top:1130px;width:316px;height:20px;background:#D4D0C8;box-shadow: inset 1px 1px 0 #404040, inset -1px -1px 0 #FFFFFF, inset 2px 2px 0 #808080;"></div>
<svg class="r" style="left:643px;top:1132px" width="16" height="16" viewBox="0 0 16 16" shape-rendering="crispEdges"><path d="M4 1 H11 L14 4 V15 H4 Z" fill="#fff"/><path d="M11 1 L14 4 V15 H4" stroke="#000" fill="none"/><path d="M1 13 L6.5 2 L12 13 Z" fill="#E00000"/><rect x="5" y="11" width="3" height="2" fill="#fff"/><rect x="6" y="7" width="1" height="1" fill="#fff"/></svg>
<div class="t" style="left:660.00px;top:1135px;font-size:11px;line-height:11px;font-weight:bold;transform:scaleX(1.0790);">Универсальный корректировочный документ  *</div>
<div class="r" style="left:0px;top:1152px;width:1920px;height:1px;background:#808080;"></div>
<div class="r" style="left:0px;top:1153px;width:1920px;height:1px;background:#FFFFFF;"></div>
<div class="t" style="left:2.00px;top:1159px;font-size:11px;line-height:11px;transform:scaleX(1.0200);">Для получения подсказки нажмите F1</div>
<div class="r" style="left:1405px;top:1156px;width:25px;height:15px;background:#D4D0C8;box-shadow: inset 1px 1px 0 #808080, inset -1px -1px 0 #FFFFFF;"></div>
<div class="r" style="left:1433px;top:1156px;width:27px;height:15px;background:#D4D0C8;box-shadow: inset 1px 1px 0 #808080, inset -1px -1px 0 #FFFFFF;"></div>
<div class="t" style="left:1435.00px;top:1159px;font-size:11px;line-height:11px;">NUM</div>
<div class="r" style="left:1463px;top:1156px;width:150px;height:15px;background:#D4D0C8;box-shadow: inset 1px 1px 0 #808080, inset -1px -1px 0 #FFFFFF;"></div>
<div class="t" style="left:1465.00px;top:1159px;font-size:11px;line-height:11px;transform:scaleX(1.0200);">TA: 11.08.17  15:02:52</div>
<div class="r" style="left:1616px;top:1156px;width:150px;height:15px;background:#D4D0C8;box-shadow: inset 1px 1px 0 #808080, inset -1px -1px 0 #FFFFFF;"></div>
<div class="t" style="left:1618.00px;top:1159px;font-size:11px;line-height:11px;transform:scaleX(1.0200);">БИ: 3 квартал 2017 г.</div>
<div class="r" style="left:1769px;top:1156px;width:150px;height:15px;background:#D4D0C8;box-shadow: inset 1px 1px 0 #808080, inset -1px -1px 0 #FFFFFF;"></div>
<div class="t" style="left:1771.00px;top:1159px;font-size:11px;line-height:11px;">ТП:</div>
<div class="r" style="left:0px;top:1172px;width:1920px;height:1px;background:#D4D0C8;"></div>
<div class="r" style="left:0px;top:1173px;width:1920px;height:1px;background:#FFFFFF;"></div>
<div class="r" style="left:2px;top:1176px;width:52px;height:21px;background:#D4D0C8;box-shadow: inset -1px -1px 0 #404040, inset 1px 1px 0 #D4D0C8, inset -2px -2px 0 #808080, inset 2px 2px 0 #FFFFFF;"></div>
<svg class="r" style="left:5px;top:1178px" width="16" height="16" viewBox="0 0 16 16"><path d="M1 3 Q4 1 7 3 V8 Q4 6 1 8 Z" fill="#F05022"/><path d="M8 3 Q11 1 15 3 V8 Q11 6 8 8 Z" fill="#7FBA00"/><path d="M1 9 Q4 7 7 9 V14 Q4 12 1 14 Z" fill="#00A4EF"/><path d="M8 9 Q11 7 15 9 V14 Q11 12 8 14 Z" fill="#FFB900"/></svg>
<div class="t" style="left:20.00px;top:1181px;font-size:12px;line-height:12px;font-weight:bold;transform:scaleX(1.0607);">Start</div>
<svg class="r" style="left:71px;top:1179px" width="16" height="16" viewBox="0 0 16 16"><circle cx="8" cy="8" r="7" fill="#DB4437"/><path d="M8 8 L2 4.5 A7 7 0 0 0 8 15 Z" fill="#0F9D58"/><path d="M8 8 L14 4.5 A7 7 0 0 1 8 15 Z" fill="#F4B400"/><circle cx="8" cy="8" r="3.3" fill="#fff"/><circle cx="8" cy="8" r="2.5" fill="#4285F4"/></svg>
<svg class="r" style="left:106px;top:1179px" width="16" height="16" viewBox="0 0 16 16" shape-rendering="crispEdges"><rect x="2" y="1" width="6" height="13" fill="#B8C0C8" stroke="#708090" stroke-width=".6"/><rect x="6" y="8" width="9" height="7" fill="#A0A8B0" stroke="#708090" stroke-width=".6"/></svg>
<div class="r" style="left:131px;top:1176px;width:158px;height:21px;background:#D4D0C8;box-shadow: inset -1px -1px 0 #404040, inset 1px 1px 0 #D4D0C8, inset -2px -2px 0 #808080, inset 2px 2px 0 #FFFFFF;"></div>
<svg class="r" style="left:135px;top:1179px" width="16" height="16" viewBox="0 0 16 16" shape-rendering="crispEdges"><path d="M1 3 H9 L10 2 H15 V12 L13 13 H8 L7 14 H3 L1 12 Z" fill="#F4F040"/><path d="M1.5 6 L4 12 L7 4" stroke="#C02050" stroke-width="2.2" fill="none"/><path d="M6 9 Q9 5 15 4" stroke="#5010A0" stroke-width="2.2" fill="none"/><path d="M8 11 H12 L11 13 L14 14 M10 12 L9 16" stroke="#1010B0" stroke-width="2" fill="none"/></svg>
<div class="t" style="left:155.00px;top:1181px;font-size:11px;line-height:11px;transform:scaleX(1.0200);">Конфигуратор - Торгов...</div>
<div class="r" style="left:291px;top:1176px;width:158px;height:21px;background:#D4D0C8;box-shadow: inset -1px -1px 0 #404040, inset 1px 1px 0 #D4D0C8, inset -2px -2px 0 #808080, inset 2px 2px 0 #FFFFFF;"></div>
<svg class="r" style="left:295px;top:1179px" width="16" height="16" viewBox="0 0 16 16" shape-rendering="crispEdges"><path d="M1 3 H9 L10 2 H15 V12 L13 13 H8 L7 14 H3 L1 12 Z" fill="#F4F040"/><path d="M1.5 6 L4 12 L7 4" stroke="#C02050" stroke-width="2.2" fill="none"/><path d="M6 9 Q9 5 15 4" stroke="#5010A0" stroke-width="2.2" fill="none"/><path d="M8 11 H12 L11 13 L14 14 M10 12 L9 16" stroke="#1010B0" stroke-width="2" fill="none"/></svg>
<div class="t" style="left:315.00px;top:1181px;font-size:11px;line-height:11px;transform:scaleX(1.0200);">Конфигуратор - Торгов...</div>
<div class="r" style="left:452px;top:1176px;width:158px;height:21px;background-image:repeating-conic-gradient(#fff 0 25%, #E8E6E0 0 50%);background-size:2px 2px;box-shadow: inset 1px 1px 0 #404040, inset -1px -1px 0 #FFFFFF, inset 2px 2px 0 #808080;"></div>
<svg class="r" style="left:456px;top:1179px" width="16" height="16" viewBox="0 0 16 16" shape-rendering="crispEdges"><path d="M1 3 H9 L10 2 H15 V12 L13 13 H8 L7 14 H3 L1 12 Z" fill="#F4F040"/><path d="M1.5 6 L4 12 L7 4" stroke="#C02050" stroke-width="2.2" fill="none"/><path d="M6 9 Q9 5 15 4" stroke="#5010A0" stroke-width="2.2" fill="none"/><path d="M7 5 Q9 3 11 4" stroke="#101060" stroke-width="1.3" fill="none"/><text x="9" y="16" font-size="5.5" font-weight="bold" fill="#000" font-family="Liberation Sans">V7</text></svg>
<div class="t" style="left:476.00px;top:1181px;font-size:11px;line-height:11px;font-weight:bold;transform:scaleX(1.0437);">1С:Предприятие - То...</div>
<div class="r" style="left:613px;top:1176px;width:158px;height:21px;background:#D4D0C8;box-shadow: inset -1px -1px 0 #404040, inset 1px 1px 0 #D4D0C8, inset -2px -2px 0 #808080, inset 2px 2px 0 #FFFFFF;"></div>
<svg class="r" style="left:619px;top:1179px" width="16" height="16" viewBox="0 0 16 16" shape-rendering="crispEdges"><path d="M1 3 H6 L7 4 H13 V15 H1 Z" fill="#E8C850"/><path d="M3 4 L10 2 V14 L3 15 Z" fill="#F8E070"/></svg>
<div class="t" style="left:637.00px;top:1181px;font-size:11px;line-height:11px;transform:scaleX(1.0200);">Base c 04.10.09</div>
<div class="r" style="left:773px;top:1176px;width:158px;height:21px;background:#D4D0C8;box-shadow: inset -1px -1px 0 #404040, inset 1px 1px 0 #D4D0C8, inset -2px -2px 0 #808080, inset 2px 2px 0 #FFFFFF;"></div>
<svg class="r" style="left:779px;top:1179px" width="16" height="16" viewBox="0 0 16 16" shape-rendering="crispEdges"><path d="M1 3 H6 L7 4 H13 V15 H1 Z" fill="#E8C850"/><path d="M3 4 L10 2 V14 L3 15 Z" fill="#F8E070"/></svg>
<div class="t" style="left:797.00px;top:1181px;font-size:11px;line-height:11px;transform:scaleX(1.0200);">test для апдейтов</div>
<div class="r" style="left:933px;top:1176px;width:158px;height:21px;background:#D4D0C8;box-shadow: inset -1px -1px 0 #404040, inset 1px 1px 0 #D4D0C8, inset -2px -2px 0 #808080, inset 2px 2px 0 #FFFFFF;"></div>
<svg class="r" style="left:939px;top:1179px" width="16" height="16" viewBox="0 0 16 16" shape-rendering="crispEdges"><path d="M1 3 H6 L7 4 H13 V15 H1 Z" fill="#E8C850"/><path d="M3 4 L10 2 V14 L3 15 Z" fill="#F8E070"/></svg>
<div class="t" style="left:957.00px;top:1181px;font-size:11px;line-height:11px;">unp</div>
<div class="t" style="left:1709.00px;top:1181px;font-size:11px;line-height:11px;">RU</div>
<div class="r" style="left:1728px;top:1176px;width:1px;height:21px;background:#808080;"></div>
<div class="r" style="left:1729px;top:1176px;width:1px;height:21px;background:#FFFFFF;"></div>
<div class="r" style="left:1732px;top:1176px;width:186px;height:21px;background:#D4D0C8;box-shadow: inset 1px 1px 0 #808080, inset -1px -1px 0 #FFFFFF;"></div>
<svg class="r" style="left:1739px;top:1179px" width="16" height="16" viewBox="0 0 16 16" shape-rendering="crispEdges"><rect x="1" y="3" width="14" height="12" fill="#30C0E0"/><path d="M2 1 H14" stroke="#E02020" stroke-width="2"/><rect x="3" y="8" width="5" height="7" fill="#fff" stroke="#000"/><rect x="10" y="6" width="4" height="5" fill="#F0E040"/></svg>
<svg class="r" style="left:1763px;top:1179px" width="16" height="16" viewBox="0 0 16 16" shape-rendering="crispEdges"><path d="M2 1 V15" stroke="#606060"/><path d="M3 2 H13 L11 5 L13 8 H3 Z" fill="#fff" stroke="#808080"/></svg>
<svg class="r" style="left:1787px;top:1179px" width="16" height="16" viewBox="0 0 16 16" shape-rendering="crispEdges"><rect x="4" y="4" width="11" height="9" fill="#E0E0E0" stroke="#606060"/><path d="M2 1 V12 H4" stroke="#606060" fill="none"/></svg>
<svg class="r" style="left:1811px;top:1179px" width="16" height="16" viewBox="0 0 16 16" shape-rendering="crispEdges"><path d="M1 6 H4 L8 2 V14 L4 10 H1 Z" fill="#fff" stroke="#606060"/><circle cx="12" cy="11" r="3.5" fill="#E02020"/><path d="M10.5 9.5 L13.5 12.5 M13.5 9.5 L10.5 12.5" stroke="#fff"/></svg>
<svg class="r" style="left:1835px;top:1179px" width="16" height="16" viewBox="0 0 16 16" shape-rendering="crispEdges"><rect x="3" y="3" width="9" height="12" fill="#fff" stroke="#606060"/><path d="M6 1 V4 M9 1 V4" stroke="#606060"/><rect x="5" y="4" width="6" height="5" fill="#fff" stroke="#404040"/></svg>
<div class="t" style="left:1865.00px;top:1181px;font-size:11px;line-height:11px;">20:12</div>
<svg class="r" style="left:1901px;top:1181px" width="15" height="13"><rect x="0" y="0" width="15" height="12" fill="#2A6AD0"/><rect x="1" y="1" width="13" height="8" fill="#3C82E8"/><rect x="0" y="9" width="15" height="3" fill="#203050"/><rect x="0" y="12" width="15" height="1" fill="#8898B0"/></svg>
<div class="t" style="left:11.00px;top:158px;font-size:11px;line-height:11px;">Универсальный</div>
<div class="t" style="left:11.00px;top:172px;font-size:11px;line-height:11px;transform:scaleX(1.0200);">корректировочный</div>
<div class="t" style="left:11.00px;top:186px;font-size:11px;line-height:11px;">документ</div>
<div class="t" style="left:11.00px;top:223px;font-size:11px;line-height:11px;">Статус:</div>
<div class="r" style="left:64px;top:219px;width:23px;height:16px;background:transparent;border:1px solid #000;box-sizing:border-box;"></div>
<div class="t" style="left:72.44px;top:223px;font-size:11px;line-height:11px;">1</div>
<div class="t" style="left:11.00px;top:252px;font-size:9px;line-height:9px;">1 – корректировочный</div>
<div class="t" style="left:11.00px;top:264px;font-size:9px;line-height:9px;">счет-фактура и согла-</div>
<div class="t" style="left:11.00px;top:276px;font-size:9px;line-height:9px;">шение (уведомление)</div>
<div class="t" style="left:11.00px;top:288px;font-size:9px;line-height:9px;">2 – соглашение</div>
<div class="t" style="left:11.00px;top:300px;font-size:9px;line-height:9px;">(уведомление)</div>
<div class="r" style="left:118px;top:134px;width:2px;height:456px;background:#000;"></div>
<div class="t" style="left:849.00px;top:136px;font-size:10px;line-height:10px;-webkit-text-stroke:0.15px #000;transform:scaleX(0.9335);">Приложение № 1 к письму ФНС России от 29.09.2014 № ММВ-20-3/</div>
<div class="r" style="left:1143px;top:145px;width:25px;height:1px;background:#000;"></div>
<div class="t" style="left:715.00px;top:148px;font-size:10px;line-height:10px;-webkit-text-stroke:0.15px #000;transform:scaleX(0.9263);">Приложение № 2 к постановлению Правительства Российской Федерации от 26 декабря 2011 г. № 1137</div>
<div class="t" style="left:128.00px;top:173px;font-size:11px;line-height:11px;transform:scaleX(1.0292);">Корректировочный счет-фактура №</div>
<div class="r" style="left:343px;top:184px;width:86px;height:1px;background:#000;"></div>
<div class="t" style="left:370.66px;top:173px;font-size:11px;line-height:11px;">B369</div>
<div class="t" style="left:431.00px;top:173px;font-size:11px;line-height:11px;">от</div>
<div class="r" style="left:448px;top:184px;width:107px;height:1px;background:#000;"></div>
<div class="t" style="left:452.00px;top:173px;font-size:11px;line-height:11px;transform:scaleX(1.0200);">08 Августа 2017 г.</div>
<div class="t" style="left:569.00px;top:173px;font-size:11px;line-height:11px;">(1),</div>
<div class="t" style="left:598.00px;top:173px;font-size:11px;line-height:11px;transform:scaleX(1.0200);">исправление корректировочного счета-фактуры №</div>
<div class="r" style="left:876px;top:184px;width:114px;height:1px;background:#000;"></div>
<div class="t" style="left:879.00px;top:173px;font-size:11px;line-height:11px;transform:scaleX(0.9600);">----</div>
<div class="t" style="left:1005.00px;top:173px;font-size:11px;line-height:11px;">от</div>
<div class="r" style="left:1030px;top:184px;width:106px;height:1px;background:#000;"></div>
<div class="t" style="left:1033.00px;top:173px;font-size:11px;line-height:11px;transform:scaleX(0.9600);">----</div>
<div class="t" style="left:1145.00px;top:173px;font-size:11px;line-height:11px;">(1а)</div>
<div class="t" style="left:128.00px;top:187px;font-size:11px;line-height:11px;transform:scaleX(1.0315);">К счету-фактуре (счетам-фактурам)</div>
<div class="t" style="left:346.00px;top:188px;font-size:11px;line-height:11px;transform:scaleX(1.0307);">№ 510 от 22 Июня 2017 г., с учетом исправления № ---- от ----</div>
<div class="t" style="left:1145.00px;top:188px;font-size:11px;line-height:11px;">(1б)</div>
<div class="t" style="left:128.00px;top:208px;font-size:11px;line-height:11px;font-weight:bold;">Продавец:</div>
<div class="r" style="left:343px;top:219px;width:793px;height:1px;background:#000;"></div>
<div class="t" style="left:1148.00px;top:208px;font-size:11px;line-height:11px;">(2)</div>
<div class="t" style="left:128.00px;top:223px;font-size:11px;line-height:11px;">Адрес:</div>
<div class="r" style="left:343px;top:234px;width:793px;height:1px;background:#000;"></div>
<div class="t" style="left:1145.00px;top:223px;font-size:11px;line-height:11px;">(2а)</div>
<div class="t" style="left:128.00px;top:238px;font-size:11px;line-height:11px;transform:scaleX(1.0200);">ИНН/КПП продавца:</div>
<div class="r" style="left:343px;top:249px;width:793px;height:1px;background:#000;"></div>
<div class="t" style="left:1145.00px;top:238px;font-size:11px;line-height:11px;">(2б)</div>
<div class="t" style="left:128.00px;top:253px;font-size:11px;line-height:11px;font-weight:bold;">Покупатель:</div>
<div class="r" style="left:343px;top:264px;width:793px;height:1px;background:#000;"></div>
<div class="t" style="left:1148.00px;top:253px;font-size:11px;line-height:11px;">(3)</div>
<div class="t" style="left:128.00px;top:268px;font-size:11px;line-height:11px;">Адрес:</div>
<div class="r" style="left:343px;top:279px;width:793px;height:1px;background:#000;"></div>
<div class="t" style="left:1145.00px;top:268px;font-size:11px;line-height:11px;">(3а)</div>
<div class="t" style="left:128.00px;top:283px;font-size:11px;line-height:11px;transform:scaleX(1.0200);">ИНН/КПП покупателя:</div>
<div class="r" style="left:343px;top:294px;width:793px;height:1px;background:#000;"></div>
<div class="t" style="left:1145.00px;top:283px;font-size:11px;line-height:11px;">(3б)</div>
<div class="t" style="left:128.00px;top:298px;font-size:11px;line-height:11px;transform:scaleX(1.0200);">Валюта: наименование, код</div>
<div class="r" style="left:343px;top:309px;width:793px;height:1px;background:#000;"></div>
<div class="t" style="left:1148.00px;top:298px;font-size:11px;line-height:11px;">(4)</div>
<div class="t" style="left:345.00px;top:298px;font-size:11px;line-height:11px;transform:scaleX(1.0200);">Российский рубль, 643</div>
<div class="r" style="left:8px;top:314px;width:1163px;height:1px;background:#000;"></div>
<div class="r" style="left:8px;top:314px;width:1px;height:203px;background:#000;"></div>
<div class="r" style="left:1170px;top:314px;width:1px;height:203px;background:#000;"></div>
<div class="r" style="left:8px;top:413px;width:1163px;height:1px;background:#000;"></div>
<div class="r" style="left:8px;top:426px;width:1163px;height:1px;background:#000;"></div>
<div class="r" style="left:8px;top:486px;width:1163px;height:1px;background:#000;"></div>
<div class="r" style="left:406px;top:441px;width:765px;height:1px;background:#000;"></div>
<div class="r" style="left:406px;top:456px;width:765px;height:1px;background:#000;"></div>
<div class="r" style="left:406px;top:471px;width:765px;height:1px;background:#000;"></div>
<div class="r" style="left:118px;top:501px;width:1053px;height:1px;background:#000;"></div>
<div class="r" style="left:8px;top:516px;width:1163px;height:1px;background:#000;"></div>
<div class="r" style="left:43px;top:314px;width:1px;height:173px;background:#000;"></div>
<div class="r" style="left:406px;top:314px;width:1px;height:173px;background:#000;"></div>
<div class="r" style="left:560px;top:314px;width:1px;height:173px;background:#000;"></div>
<div class="r" style="left:560px;top:341px;width:100px;height:1px;background:#000;"></div>
<div class="r" style="left:596px;top:341px;width:1px;height:146px;background:#000;"></div>
<div class="r" style="left:659px;top:314px;width:1px;height:173px;background:#000;"></div>
<div class="r" style="left:710px;top:314px;width:1px;height:173px;background:#000;"></div>
<div class="r" style="left:785px;top:314px;width:1px;height:203px;background:#000;"></div>
<div class="r" style="left:869px;top:314px;width:1px;height:203px;background:#000;"></div>
<div class="r" style="left:939px;top:314px;width:1px;height:203px;background:#000;"></div>
<div class="r" style="left:988px;top:314px;width:1px;height:203px;background:#000;"></div>
<div class="r" style="left:1058px;top:314px;width:1px;height:203px;background:#000;"></div>
<div class="t" style="left:20.10px;top:352px;font-size:11px;line-height:11px;">№</div>
<div class="t" style="left:18.52px;top:366px;font-size:11px;line-height:11px;">п/п</div>
<div class="t" style="left:50.19px;top:352px;font-size:11px;line-height:11px;transform:scaleX(1.0200);">Код товара/</div>
<div class="t" style="left:49.01px;top:366px;font-size:11px;line-height:11px;transform:scaleX(1.0200);">работ, услуг</div>
<div class="t" style="left:120.45px;top:352px;font-size:11px;line-height:11px;transform:scaleX(1.0200);">Наименование товара (описание выполненных работ,</div>
<div class="t" style="left:154.38px;top:366px;font-size:11px;line-height:11px;transform:scaleX(1.0200);">оказанных услуг), имущественного права</div>
<div class="t" style="left:427.99px;top:317px;font-size:11px;line-height:11px;transform:scaleX(1.0200);">Показатели в связи с</div>
<div class="t" style="left:422.72px;top:331px;font-size:11px;line-height:11px;transform:scaleX(1.0200);">изменением стоимости</div>
<div class="t" style="left:427.36px;top:345px;font-size:11px;line-height:11px;transform:scaleX(1.0200);">отгруженных товаров</div>
<div class="t" style="left:427.68px;top:359px;font-size:11px;line-height:11px;transform:scaleX(1.0200);">(выполненных работ,</div>
<div class="t" style="left:437.36px;top:373px;font-size:11px;line-height:11px;transform:scaleX(1.0200);">оказанных услуг),</div>
<div class="t" style="left:451.68px;top:387px;font-size:11px;line-height:11px;transform:scaleX(1.0200);">переданных</div>
<div class="t" style="left:427.64px;top:401px;font-size:11px;line-height:11px;transform:scaleX(1.0200);">имущественных прав</div>
<div class="t" style="left:587.73px;top:316px;font-size:11px;line-height:11px;">Единица</div>
<div class="t" style="left:582.36px;top:330px;font-size:11px;line-height:11px;">измерения</div>
<div class="t" style="left:569.83px;top:372px;font-size:11px;line-height:11px;">код</div>
<div class="t" style="left:604.16px;top:344px;font-size:11px;line-height:11px;">условное</div>
<div class="t" style="left:608.28px;top:358px;font-size:11px;line-height:11px;">обозна-</div>
<div class="t" style="left:612.91px;top:372px;font-size:11px;line-height:11px;">чение</div>
<div class="t" style="left:608.96px;top:386px;font-size:11px;line-height:11px;">(нацио-</div>
<div class="t" style="left:604.84px;top:400px;font-size:11px;line-height:11px;">нальное)</div>
<div class="t" style="left:670.62px;top:345px;font-size:11px;line-height:11px;">Коли-</div>
<div class="t" style="left:667.83px;top:359px;font-size:11px;line-height:11px;">чество</div>
<div class="t" style="left:664.85px;top:373px;font-size:11px;line-height:11px;">(объем)</div>
<div class="t" style="left:712.66px;top:338px;font-size:11px;line-height:11px;transform:scaleX(1.0200);">Цена (тариф)</div>
<div class="t" style="left:742.42px;top:352px;font-size:11px;line-height:11px;">за</div>
<div class="t" style="left:726.65px;top:366px;font-size:11px;line-height:11px;">единицу</div>
<div class="t" style="left:720.36px;top:380px;font-size:11px;line-height:11px;">измерения</div>
<div class="t" style="left:799.90px;top:317px;font-size:11px;line-height:11px;">Стоимость</div>
<div class="t" style="left:806.90px;top:331px;font-size:11px;line-height:11px;">товаров</div>
<div class="t" style="left:790.21px;top:345px;font-size:11px;line-height:11px;transform:scaleX(1.0200);">(работ, услуг),</div>
<div class="t" style="left:793.53px;top:359px;font-size:11px;line-height:11px;transform:scaleX(1.0200);">имуществен-</div>
<div class="t" style="left:804.21px;top:373px;font-size:11px;line-height:11px;">ных прав</div>
<div class="t" style="left:795.83px;top:387px;font-size:11px;line-height:11px;transform:scaleX(1.0200);">без налога -</div>
<div class="t" style="left:813.70px;top:401px;font-size:11px;line-height:11px;">всего</div>
<div class="t" style="left:889.94px;top:338px;font-size:11px;line-height:11px;">В том</div>
<div class="t" style="left:889.54px;top:352px;font-size:11px;line-height:11px;">числе</div>
<div class="t" style="left:888.38px;top:366px;font-size:11px;line-height:11px;">сумма</div>
<div class="t" style="left:887.23px;top:380px;font-size:11px;line-height:11px;">акциза</div>
<div class="t" style="left:943.80px;top:345px;font-size:11px;line-height:11px;">Налого-</div>
<div class="t" style="left:955.04px;top:359px;font-size:11px;line-height:11px;">вая</div>
<div class="t" style="left:947.29px;top:373px;font-size:11px;line-height:11px;">ставка</div>
<div class="t" style="left:1006.16px;top:352px;font-size:11px;line-height:11px;">Сумма</div>
<div class="t" style="left:1006.07px;top:366px;font-size:11px;line-height:11px;">налога</div>
<div class="t" style="left:1063.78px;top:331px;font-size:11px;line-height:11px;transform:scaleX(1.0200);">Стоимость товаров</div>
<div class="t" style="left:1077.21px;top:345px;font-size:11px;line-height:11px;transform:scaleX(1.0200);">(работ, услуг),</div>
<div class="t" style="left:1080.53px;top:359px;font-size:11px;line-height:11px;transform:scaleX(1.0200);">имуществен-</div>
<div class="t" style="left:1063.19px;top:373px;font-size:11px;line-height:11px;transform:scaleX(1.0200);">ных прав с налогом</div>
<div class="t" style="left:1097.34px;top:387px;font-size:11px;line-height:11px;">- всего</div>
<div class="t" style="left:22.33px;top:415px;font-size:11px;line-height:11px;">А</div>
<div class="t" style="left:77.39px;top:415px;font-size:11px;line-height:11px;">Б</div>
<div class="t" style="left:259.44px;top:415px;font-size:11px;line-height:11px;">1</div>
<div class="t" style="left:477.38px;top:415px;font-size:11px;line-height:11px;">1а</div>
<div class="t" style="left:575.44px;top:415px;font-size:11px;line-height:11px;">2</div>
<div class="t" style="left:621.88px;top:415px;font-size:11px;line-height:11px;">2а</div>
<div class="t" style="left:681.94px;top:415px;font-size:11px;line-height:11px;">3</div>
<div class="t" style="left:744.94px;top:415px;font-size:11px;line-height:11px;">4</div>
<div class="t" style="left:824.44px;top:415px;font-size:11px;line-height:11px;">5</div>
<div class="t" style="left:901.44px;top:415px;font-size:11px;line-height:11px;">6</div>
<div class="t" style="left:960.94px;top:415px;font-size:11px;line-height:11px;">7</div>
<div class="t" style="left:1020.44px;top:415px;font-size:11px;line-height:11px;">8</div>
<div class="t" style="left:1111.44px;top:415px;font-size:11px;line-height:11px;">9</div>
<div class="t" style="left:33.88px;top:429px;font-size:11px;line-height:11px;">1</div>
<div class="t" style="left:120.00px;top:429px;font-size:11px;line-height:11px;transform:scaleX(1.0200);">Ручка двери</div>
<div class="t" style="left:409.00px;top:429px;font-size:11px;line-height:11px;transform:scaleX(1.0200);">А (до изменения)</div>
<div class="t" style="left:680.57px;top:429px;font-size:11px;line-height:11px;transform:scaleX(0.9600);">1,000</div>
<div class="t" style="left:755.57px;top:429px;font-size:11px;line-height:11px;transform:scaleX(0.9600);">86,44</div>
<div class="t" style="left:839.57px;top:429px;font-size:11px;line-height:11px;transform:scaleX(0.9600);">86,44</div>
<div class="t" style="left:871.00px;top:429px;font-size:11px;line-height:11px;transform:scaleX(1.0200);">без акциза</div>
<div class="t" style="left:941.00px;top:429px;font-size:11px;line-height:11px;">18%</div>
<div class="t" style="left:1028.57px;top:429px;font-size:11px;line-height:11px;transform:scaleX(0.9600);">15,56</div>
<div class="t" style="left:1134.70px;top:429px;font-size:11px;line-height:11px;transform:scaleX(0.9600);">102,00</div>
<div class="t" style="left:409.00px;top:444px;font-size:11px;line-height:11px;transform:scaleX(1.0200);">Б (после изменения)</div>
<div class="t" style="left:680.57px;top:444px;font-size:11px;line-height:11px;transform:scaleX(0.9600);">1,000</div>
<div class="t" style="left:749.70px;top:444px;font-size:11px;line-height:11px;transform:scaleX(0.9600);">172,03</div>
<div class="t" style="left:833.70px;top:444px;font-size:11px;line-height:11px;transform:scaleX(0.9600);">172,03</div>
<div class="t" style="left:871.00px;top:444px;font-size:11px;line-height:11px;transform:scaleX(1.0200);">без акциза</div>
<div class="t" style="left:941.00px;top:444px;font-size:11px;line-height:11px;">18%</div>
<div class="t" style="left:1028.57px;top:444px;font-size:11px;line-height:11px;transform:scaleX(0.9600);">30,97</div>
<div class="t" style="left:1134.70px;top:444px;font-size:11px;line-height:11px;transform:scaleX(0.9600);">203,00</div>
<div class="t" style="left:409.00px;top:459px;font-size:11px;line-height:11px;transform:scaleX(1.0200);">В (увеличение)</div>
<div class="t" style="left:699.66px;top:459px;font-size:11px;line-height:11px;">X</div>
<div class="t" style="left:774.66px;top:459px;font-size:11px;line-height:11px;">X</div>
<div class="t" style="left:563.00px;top:459px;font-size:11px;line-height:11px;">X</div>
<div class="t" style="left:599.00px;top:459px;font-size:11px;line-height:11px;">X</div>
<div class="t" style="left:839.57px;top:459px;font-size:11px;line-height:11px;transform:scaleX(0.9600);">85,59</div>
<div class="t" style="left:871.00px;top:459px;font-size:11px;line-height:11px;">--</div>
<div class="t" style="left:941.00px;top:459px;font-size:11px;line-height:11px;">X</div>
<div class="t" style="left:1028.57px;top:459px;font-size:11px;line-height:11px;transform:scaleX(0.9600);">15,41</div>
<div class="t" style="left:1134.70px;top:459px;font-size:11px;line-height:11px;transform:scaleX(0.9600);">101,00</div>
<div class="t" style="left:409.00px;top:474px;font-size:11px;line-height:11px;transform:scaleX(1.0200);">Г (уменьшение)</div>
<div class="t" style="left:699.66px;top:474px;font-size:11px;line-height:11px;">X</div>
<div class="t" style="left:774.66px;top:474px;font-size:11px;line-height:11px;">X</div>
<div class="t" style="left:563.00px;top:474px;font-size:11px;line-height:11px;">X</div>
<div class="t" style="left:599.00px;top:474px;font-size:11px;line-height:11px;">X</div>
<div class="t" style="left:845.45px;top:474px;font-size:11px;line-height:11px;transform:scaleX(0.9600);">0,00</div>
<div class="t" style="left:871.00px;top:474px;font-size:11px;line-height:11px;">--</div>
<div class="t" style="left:941.00px;top:474px;font-size:11px;line-height:11px;">X</div>
<div class="t" style="left:1034.45px;top:474px;font-size:11px;line-height:11px;transform:scaleX(0.9600);">0,00</div>
<div class="t" style="left:1146.45px;top:474px;font-size:11px;line-height:11px;transform:scaleX(0.9600);">0,00</div>
<div class="t" style="left:845.45px;top:489px;font-size:11px;line-height:11px;transform:scaleX(0.9600);">0,00</div>
<div class="t" style="left:871.00px;top:489px;font-size:11px;line-height:11px;">X</div>
<div class="t" style="left:941.00px;top:489px;font-size:11px;line-height:11px;">X</div>
<div class="t" style="left:1028.57px;top:489px;font-size:11px;line-height:11px;transform:scaleX(0.9600);">15,41</div>
<div class="t" style="left:1146.45px;top:489px;font-size:11px;line-height:11px;transform:scaleX(0.9600);">0,00</div>
<div class="t" style="left:845.45px;top:504px;font-size:11px;line-height:11px;transform:scaleX(0.9600);">0,00</div>
<div class="t" style="left:871.00px;top:504px;font-size:11px;line-height:11px;">X</div>
<div class="t" style="left:941.00px;top:504px;font-size:11px;line-height:11px;">X</div>
<div class="t" style="left:1034.45px;top:504px;font-size:11px;line-height:11px;transform:scaleX(0.9600);">0,00</div>
<div class="t" style="left:1146.45px;top:504px;font-size:11px;line-height:11px;transform:scaleX(0.9600);">0,00</div>
<div class="t" style="left:604.47px;top:489px;font-size:11px;line-height:11px;transform:scaleX(1.0200);">Всего увеличение (сумма строк В)</div>
<div class="t" style="left:601.74px;top:504px;font-size:11px;line-height:11px;transform:scaleX(1.0200);">Всего уменьшение (сумма строк Г)</div>
<div class="t" style="left:11.00px;top:523px;font-size:11px;line-height:11px;">Документ</div>
<div class="t" style="left:11.00px;top:537px;font-size:11px;line-height:11px;transform:scaleX(1.0200);">составлен на</div>
<div class="r" style="left:8px;top:562px;width:43px;height:1px;background:#000;"></div>
<div class="t" style="left:25.44px;top:551px;font-size:11px;line-height:11px;">1</div>
<div class="t" style="left:60.00px;top:551px;font-size:11px;line-height:11px;">листе</div>
<div class="t" style="left:128.00px;top:523px;font-size:11px;line-height:11px;transform:scaleX(1.0200);">Руководитель организации или иное</div>
<div class="t" style="left:128.00px;top:537px;font-size:11px;line-height:11px;transform:scaleX(1.0200);">уполномоченное лицо</div>
<div class="r" style="left:331px;top:548px;width:323px;height:1px;background:#000;"></div>
<div class="r" style="left:487px;top:546px;width:1px;height:3px;background:#000;"></div>
<div class="t" style="left:376.33px;top:551px;font-size:7px;line-height:7px;font-weight:bold;">(подпись)</div>
<div class="t" style="left:545.37px;top:551px;font-size:7px;line-height:7px;font-weight:bold;">(ф.и.о)</div>
<div class="t" style="left:128.00px;top:565px;font-size:11px;line-height:11px;transform:scaleX(1.0200);">Индивидуальный предприниматель</div>
<div class="r" style="left:331px;top:576px;width:126px;height:1px;background:#000;"></div>
<div class="r" style="left:462px;top:576px;width:192px;height:1px;background:#000;"></div>
<div class="t" style="left:376.33px;top:579px;font-size:7px;line-height:7px;font-weight:bold;">(подпись)</div>
<div class="t" style="left:545.37px;top:579px;font-size:7px;line-height:7px;font-weight:bold;">(ф.и.о)</div>
<div class="t" style="left:676.00px;top:523px;font-size:11px;line-height:11px;transform:scaleX(1.0200);">Главный бухгалтер или иное</div>
<div class="t" style="left:676.00px;top:537px;font-size:11px;line-height:11px;transform:scaleX(1.0200);">уполномоченное лицо</div>
<div class="r" style="left:848px;top:548px;width:121px;height:1px;background:#000;"></div>
<div class="r" style="left:974px;top:548px;width:198px;height:1px;background:#000;"></div>
<div class="r" style="left:999px;top:546px;width:1px;height:3px;background:#000;"></div>
<div class="t" style="left:890.33px;top:551px;font-size:7px;line-height:7px;font-weight:bold;">(подпись)</div>
<div class="t" style="left:1060.37px;top:551px;font-size:7px;line-height:7px;font-weight:bold;">(ф.и.о)</div>
<div class="r" style="left:680px;top:576px;width:491px;height:1px;background:#000;"></div>
<div class="t" style="left:755.00px;top:579px;font-size:7px;line-height:7px;font-weight:bold;">(реквизиты свидетельства о государственной регистрации индивидуального предпринимателя)</div>
<div class="r" style="left:118px;top:588px;width:1054px;height:2px;background:#000;"></div>
<div class="t" style="left:11.00px;top:597px;font-size:11px;line-height:11px;transform:scaleX(1.0200);">К передаточным (отгрузочным) документам</div>
<div class="t" style="left:334.00px;top:597px;font-size:11px;line-height:11px;transform:scaleX(1.0200);">Универсальный передаточный документ №  от</div>
<div class="r" style="left:331px;top:608px;width:805px;height:1px;background:#000;"></div>
<div class="t" style="left:1146.00px;top:602px;font-size:11px;line-height:11px;">[5]</div>
<div class="t" style="left:517.00px;top:611px;font-size:7px;line-height:7px;font-weight:bold;transform:scaleX(1.0045);">(реквизиты передаточных(отгрузочных) документов, которыми были переданы товары, услуги, результаты работ, права)</div>
<div class="t" style="left:11.00px;top:622px;font-size:11px;line-height:11px;transform:scaleX(1.0200);">Основание изменения стоимости</div>
<div class="t" style="left:206.00px;top:622px;font-size:11px;line-height:11px;transform:scaleX(1.0200);">Основной договор</div>
<div class="r" style="left:204px;top:633px;width:932px;height:1px;background:#000;"></div>
<div class="t" style="left:1146.00px;top:628px;font-size:11px;line-height:11px;">[6]</div>
<div class="t" style="left:573.00px;top:636px;font-size:7px;line-height:7px;font-weight:bold;transform:scaleX(1.0100);">(реквизиты договора, соглашения, уведомления и др.)</div>
<div class="t" style="left:11.00px;top:647px;font-size:11px;line-height:11px;transform:scaleX(1.0200);">Иные сведения</div>
<div class="r" style="left:204px;top:658px;width:932px;height:1px;background:#000;"></div>
<div class="t" style="left:1146.00px;top:653px;font-size:11px;line-height:11px;">[7]</div>
<div class="t" style="left:507.00px;top:661px;font-size:7px;line-height:7px;font-weight:bold;transform:scaleX(1.0068);">(ссылки на неотъемлемые приложения, сопутствующие документы, иные документы и т.п.)</div>
<div class="t" style="left:11.00px;top:678px;font-size:11px;line-height:11px;transform:scaleX(1.0200);">Предлагаю изменить стоимость</div>
<div class="r" style="left:8px;top:702px;width:181px;height:1px;background:#000;"></div>
<div class="r" style="left:196px;top:702px;width:176px;height:1px;background:#000;"></div>
<div class="r" style="left:378px;top:702px;width:170px;height:1px;background:#000;"></div>
<div class="t" style="left:77.04px;top:705px;font-size:7px;line-height:7px;font-weight:bold;">(должность)</div>
<div class="t" style="left:265.83px;top:705px;font-size:7px;line-height:7px;font-weight:bold;">(подпись)</div>
<div class="t" style="left:450.37px;top:705px;font-size:7px;line-height:7px;font-weight:bold;">(ф.и.о)</div>
<div class="t" style="left:557.00px;top:697px;font-size:11px;line-height:11px;">[8]</div>
<div class="t" style="left:11.00px;top:722px;font-size:11px;line-height:11px;transform:scaleX(1.0200);">Уведомляю об изменении стоимости</div>
<div class="r" style="left:8px;top:745px;width:181px;height:1px;background:#000;"></div>
<div class="r" style="left:196px;top:745px;width:176px;height:1px;background:#000;"></div>
<div class="r" style="left:378px;top:745px;width:170px;height:1px;background:#000;"></div>
<div class="t" style="left:77.04px;top:748px;font-size:7px;line-height:7px;font-weight:bold;">(должность)</div>
<div class="t" style="left:265.83px;top:748px;font-size:7px;line-height:7px;font-weight:bold;">(подпись)</div>
<div class="t" style="left:450.37px;top:748px;font-size:7px;line-height:7px;font-weight:bold;">(ф.и.о)</div>
<div class="t" style="left:557.00px;top:740px;font-size:11px;line-height:11px;">[9]</div>
<div class="t" style="left:11.00px;top:764px;font-size:11px;line-height:11px;transform:scaleX(1.0200);">Ответственный за правильность оформления факта хозяйственной жизни</div>
<div class="r" style="left:8px;top:788px;width:181px;height:1px;background:#000;"></div>
<div class="r" style="left:196px;top:788px;width:176px;height:1px;background:#000;"></div>
<div class="r" style="left:378px;top:788px;width:170px;height:1px;background:#000;"></div>
<div class="t" style="left:77.04px;top:791px;font-size:7px;line-height:7px;font-weight:bold;">(должность)</div>
<div class="t" style="left:265.83px;top:791px;font-size:7px;line-height:7px;font-weight:bold;">(подпись)</div>
<div class="t" style="left:450.37px;top:791px;font-size:7px;line-height:7px;font-weight:bold;">(ф.и.о)</div>
<div class="t" style="left:554.00px;top:783px;font-size:11px;line-height:11px;">[10]</div>
<div class="r" style="left:12px;top:837px;width:163px;height:1px;background:repeating-linear-gradient(90deg,#555 0 2px,transparent 2px 5px);"></div>
<div class="r" style="left:8px;top:841px;width:540px;height:1px;background:#000;"></div>
<div class="t" style="left:554.00px;top:827px;font-size:11px;line-height:11px;">[11]</div>
<div class="t" style="left:119.00px;top:844px;font-size:7px;line-height:7px;font-weight:bold;transform:scaleX(1.0350);">(может не заполняться при проставлении печати в М.П., может быть указан ИНН / КПП)</div>
<div class="t" style="left:87.00px;top:855px;font-size:11px;line-height:11px;">М.П.</div>
<div class="r" style="left:585px;top:675px;width:2px;height:193px;background:#000;"></div>
<div class="t" style="left:598.00px;top:678px;font-size:11px;line-height:11px;transform:scaleX(1.0200);">С изменением стоимости согласен</div>
<div class="r" style="left:596px;top:702px;width:183px;height:1px;background:#000;"></div>
<div class="r" style="left:785px;top:702px;width:169px;height:1px;background:#000;"></div>
<div class="r" style="left:960px;top:702px;width:170px;height:1px;background:#000;"></div>
<div class="t" style="left:665.54px;top:705px;font-size:7px;line-height:7px;font-weight:bold;">(должность)</div>
<div class="t" style="left:851.83px;top:705px;font-size:7px;line-height:7px;font-weight:bold;">(подпись)</div>
<div class="t" style="left:1032.87px;top:705px;font-size:7px;line-height:7px;font-weight:bold;">(ф.и.о)</div>
<div class="t" style="left:1144.00px;top:697px;font-size:11px;line-height:11px;">[12]</div>
<div class="t" style="left:598.00px;top:734px;font-size:11px;line-height:11px;">Дата</div>
<div class="r" style="left:785px;top:745px;width:169px;height:1px;background:#000;"></div>
<div class="t" style="left:791.00px;top:735px;font-size:11px;line-height:11px;">&quot;</div>
<div class="t" style="left:816.00px;top:735px;font-size:11px;line-height:11px;">&quot;</div>
<div class="t" style="left:903.00px;top:734px;font-size:11px;line-height:11px;">20</div>
<div class="t" style="left:940.00px;top:734px;font-size:11px;line-height:11px;">г.</div>
<div class="t" style="left:1144.00px;top:739px;font-size:11px;line-height:11px;">[13]</div>
<div class="t" style="left:598.00px;top:764px;font-size:11px;line-height:11px;transform:scaleX(1.0200);">Ответственный за правильность оформления факта хозяйственной жизни</div>
<div class="r" style="left:596px;top:788px;width:183px;height:1px;background:#000;"></div>
<div class="r" style="left:785px;top:788px;width:169px;height:1px;background:#000;"></div>
<div class="r" style="left:960px;top:788px;width:176px;height:1px;background:#000;"></div>
<div class="t" style="left:665.54px;top:791px;font-size:7px;line-height:7px;font-weight:bold;">(должность)</div>
<div class="t" style="left:851.83px;top:791px;font-size:7px;line-height:7px;font-weight:bold;">(подпись)</div>
<div class="t" style="left:1032.87px;top:791px;font-size:7px;line-height:7px;font-weight:bold;">(ф.и.о)</div>
<div class="t" style="left:1144.00px;top:783px;font-size:11px;line-height:11px;">[14]</div>
<div class="t" style="left:598.00px;top:802px;font-size:11px;line-height:11px;transform:scaleX(1.0200);">Наименование экономического субъекта – составителя документа</div>
<div class="r" style="left:596px;top:841px;width:540px;height:1px;background:#000;"></div>
<div class="t" style="left:1144.00px;top:829px;font-size:11px;line-height:11px;">[15]</div>
<div class="t" style="left:708.00px;top:844px;font-size:7px;line-height:7px;font-weight:bold;transform:scaleX(1.0350);">(может не заполняться при проставлении печати в М.П., может быть указан ИНН / КПП)</div>
<div class="t" style="left:677.00px;top:855px;font-size:11px;line-height:11px;">М.П.</div>
<svg class="r" style="left:0;top:0" width="1920" height="1200" viewBox="0 0 1920 1200">
<g stroke="#ED1C24" stroke-linecap="round" stroke-linejoin="round" fill="none">
<line x1="89" y1="468" x2="962" y2="661" stroke-width="7.8"/>
<polyline points="832.5,492 870.5,540 915,600 962,661" stroke-width="4.8"/>
<polyline points="822,511 852,540 903.7,600 960,661" stroke-width="4.8"/>
<line x1="1113.5" y1="493.5" x2="964" y2="660" stroke-width="4.2"/>
<line x1="1135.5" y1="508.5" x2="966" y2="660" stroke-width="4.2"/>
<rect x="960" y="657" width="8" height="7" fill="#ED1C24" stroke="none"/>
</g></svg>
</body></html>
